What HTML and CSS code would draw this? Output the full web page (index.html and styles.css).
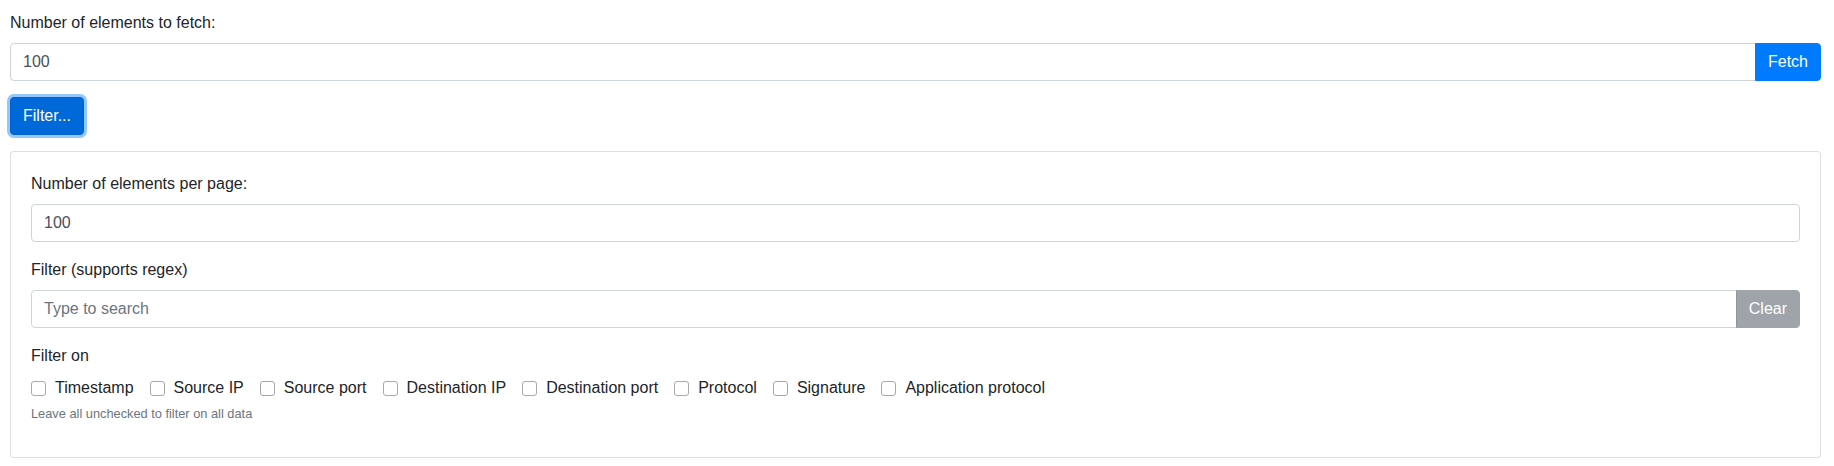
FILE: index.html
```html
<!DOCTYPE html>
<html lang="en">
<head>
<meta charset="utf-8">
<title>Fetch</title>
<link rel="stylesheet" href="styles.css">
</head>
<body>
<div class="page">
  <div class="form-group">
    <label class="label" for="fetchCount">Number of elements to fetch:</label>
    <div class="input-group">
      <input id="fetchCount" class="form-control grouped" type="text" value="100">
      <button class="btn btn-primary btn-append">Fetch</button>
    </div>
  </div>
  <button class="btn btn-focus toggle">Filter...</button>
  <div class="card">
    <div class="card-body">
      <div class="form-group">
        <label class="label" for="perPage">Number of elements per page:</label>
        <input id="perPage" class="form-control" type="text" value="100">
      </div>
      <div class="form-group">
        <label class="label" for="search">Filter (supports regex)</label>
        <div class="input-group">
          <input id="search" class="form-control grouped" type="text" placeholder="Type to search">
          <button class="btn btn-secondary btn-append" disabled>Clear</button>
        </div>
      </div>
      <div class="filter-on">
        <div class="label">Filter on</div>
        <div class="checks">
          <label class="check"><input type="checkbox" class="cb"><span>Timestamp</span></label>
          <label class="check"><input type="checkbox" class="cb"><span>Source IP</span></label>
          <label class="check"><input type="checkbox" class="cb"><span>Source port</span></label>
          <label class="check"><input type="checkbox" class="cb"><span>Destination IP</span></label>
          <label class="check"><input type="checkbox" class="cb"><span>Destination port</span></label>
          <label class="check"><input type="checkbox" class="cb"><span>Protocol</span></label>
          <label class="check"><input type="checkbox" class="cb"><span>Signature</span></label>
          <label class="check"><input type="checkbox" class="cb"><span>Application protocol</span></label>
        </div>
        <small class="form-text">Leave all unchecked to filter on all data</small>
      </div>
    </div>
  </div>
</div>
</body>
</html>
```

FILE: styles.css
```css
* { box-sizing: border-box; }
html, body { margin: 0; padding: 0; background: #fff; }
body {
  font-family: "Liberation Sans", Arial, sans-serif;
  font-size: 16px;
  line-height: 1.5;
  color: #212529;
}
.page { padding: 11px 13px 0 10px; }
.form-group { margin-bottom: 16px; }
.label { display: block; margin-bottom: 8px; line-height: 24px; }
.input-group { display: flex; align-items: stretch; }
.form-control {
  display: block;
  width: 100%;
  height: 38px;
  padding: 6px 12px;
  font-family: inherit;
  font-size: 16px;
  line-height: 24px;
  color: #495057;
  background: #fff;
  border: 1px solid #ced4da;
  border-radius: 4px;
  outline: none;
}
.form-control::placeholder { color: #6c757d; opacity: 1; }
.form-control.grouped { flex: 1 1 auto; width: 1%; border-top-right-radius: 0; border-bottom-right-radius: 0; }
.btn {
  display: inline-block;
  font-family: inherit;
  font-size: 16px;
  line-height: 24px;
  padding: 6px 12px;
  border: 1px solid transparent;
  border-radius: 4px;
  color: #fff;
  cursor: pointer;
  white-space: nowrap;
}
.btn-append { border-top-left-radius: 0; border-bottom-left-radius: 0; margin-left: -1px; }
.btn-primary { background: #007bff; border-color: #007bff; }
.btn-secondary { background: #6c757d; border-color: #6c757d; }
.btn-secondary:disabled { opacity: .65; cursor: default; }
.btn-focus {
  background: #0069d9;
  border-color: #0062cc;
  box-shadow: 0 0 0 3px rgba(38, 143, 255, .5);
}
.toggle { margin-bottom: 16px; }
.card {
  border: 1px solid rgba(0, 0, 0, .125);
  border-radius: 4px;
  background: #fff;
}
.card-body { padding: 20px 20px 19px; }
.filter-on { margin-bottom: 15px; }
.checks { display: flex; flex-wrap: wrap; align-items: center; height: 24px; }
.check { display: inline-flex; align-items: center; margin-right: 16px; }
.cb {
  appearance: none;
  -webkit-appearance: none;
  width: 15px;
  height: 15px;
  margin: 0 9px 0 0;
  border: 1px solid #a8a8a8;
  border-radius: 3px;
  background: #fff;
}
.form-text {
  display: block;
  margin-top: 4px;
  font-size: 12.8px;
  line-height: 19px;
  color: #6c757d;
}
```
